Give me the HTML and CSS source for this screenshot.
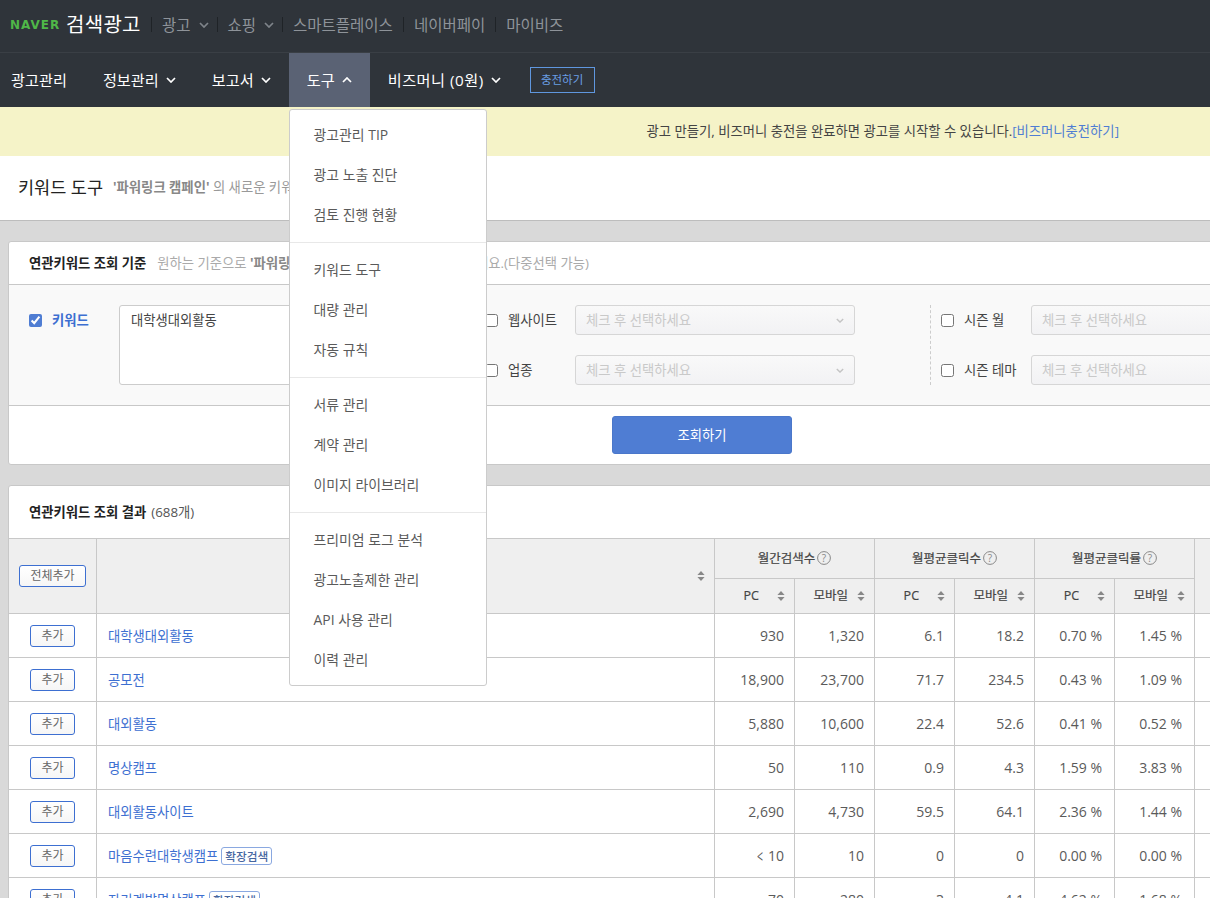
FILE: index.html
```html
<!DOCTYPE html>
<html lang="ko">
<head>
<meta charset="utf-8">
<title>키워드 도구</title>
<link rel="stylesheet" href="styles.css">
</head>
<body>
<svg class="sprite" aria-hidden="true">
  <symbol id="chev-d" viewBox="0 0 10 6"><path d="M1 1l4 4 4-4" fill="none" stroke="currentColor" stroke-width="1.7"/></symbol>
  <symbol id="chev-u" viewBox="0 0 10 6"><path d="M1 5l4-4 4 4" fill="none" stroke="currentColor" stroke-width="1.7"/></symbol>
  <symbol id="sort" viewBox="0 0 8 10"><path d="M4 0l3.6 4H.4zM4 10L.4 6h7.2z" fill="currentColor"/></symbol>
  <symbol id="help" viewBox="0 0 14 14"><circle cx="7" cy="7" r="6.4" fill="none" stroke="currentColor"/><text x="7" y="10.6" text-anchor="middle" font-size="10" fill="currentColor" font-family="Open Sans, sans-serif">?</text></symbol>
</svg>
<header class="top">
  <div class="brand"><span class="naver">NAVER</span><span class="brand-name">검색광고</span></div>
  <nav class="top-links">
    <a class="top-link top-link-arrow">광고<svg class="chev"><use href="#chev-d"/></svg></a>
    <a class="top-link top-link-arrow">쇼핑<svg class="chev"><use href="#chev-d"/></svg></a>
    <a class="top-link">스마트플레이스</a>
    <a class="top-link">네이버페이</a>
    <a class="top-link">마이비즈</a>
  </nav>
</header>
<nav class="main-nav">
  <a class="nav-item nav-first">광고관리</a>
  <a class="nav-item">정보관리<svg class="chev"><use href="#chev-d"/></svg></a>
  <a class="nav-item">보고서<svg class="chev"><use href="#chev-d"/></svg></a>
  <a class="nav-item nav-active">도구<svg class="chev"><use href="#chev-u"/></svg></a>
  <a class="nav-item nav-biz">비즈머니 (0원)<svg class="chev"><use href="#chev-d"/></svg></a>
  <a class="charge">충전하기</a>
</nav>
<ul class="menu">
  <li class="menu-group"><a>광고관리 TIP</a><a>광고 노출 진단</a><a>검토 진행 현황</a></li>
  <li class="menu-group"><a>키워드 도구</a><a>대량 관리</a><a>자동 규칙</a></li>
  <li class="menu-group"><a>서류 관리</a><a>계약 관리</a><a>이미지 라이브러리</a></li>
  <li class="menu-group"><a>프리미엄 로그 분석</a><a>광고노출제한 관리</a><a>API 사용 관리</a><a>이력 관리</a></li>
</ul>
<div class="notice">광고 만들기, 비즈머니 충전을 완료하면 광고를 시작할 수 있습니다.<a class="notice-link">[비즈머니충전하기]</a></div>
<div class="title-bar">
  <h1 class="title">키워드 도구</h1>
  <p class="subtitle"><b>'파워링크 캠페인'</b> 의 새로운 키워드를 찾아보세요</p>
</div>
<main class="content">
  <section class="card">
    <div class="card-head"><strong>연관키워드 조회 기준</strong><span class="hint">원하는 기준으로 <b>'파워링크 캠페인'</b>의 연관키워드를 조회하세요.(다중선택 가능)</span></div>
    <div class="form">
      <div class="group-keyword">
        <label class="check check-keyword"><input type="checkbox" checked>키워드</label>
        <div class="textarea">대학생대외활동</div>
      </div>
      <div class="group-mid">
        <label class="check"><input type="checkbox">웹사이트</label>
        <div class="select">체크 후 선택하세요<svg class="chev-s"><use href="#chev-d"/></svg></div>
        <label class="check"><input type="checkbox">업종</label>
        <div class="select">체크 후 선택하세요<svg class="chev-s"><use href="#chev-d"/></svg></div>
      </div>
      <div class="group-right">
        <label class="check"><input type="checkbox">시즌 월</label>
        <div class="select">체크 후 선택하세요<svg class="chev-s"><use href="#chev-d"/></svg></div>
        <label class="check"><input type="checkbox">시즌 테마</label>
        <div class="select">체크 후 선택하세요<svg class="chev-s"><use href="#chev-d"/></svg></div>
      </div>
    </div>
    <div class="form-foot"><button class="search-btn" type="button">조회하기</button></div>
  </section>
  <section class="card card-result">
    <div class="card-head card-head-result"><strong>연관키워드 조회 결과</strong><span class="count">(688개)</span></div>
    <table class="grid">
      <colgroup><col class="c-add"><col class="c-kw"><col class="c-n"><col class="c-n"><col class="c-n"><col class="c-n"><col class="c-n"><col class="c-n"><col class="c-rest"></colgroup>
      <thead>
        <tr class="h1">
          <th rowspan="2"><button class="add add-all" type="button">전체추가</button></th>
          <th rowspan="2" class="th-kw"><svg class="sort"><use href="#sort"/></svg></th>
          <th colspan="2">월간검색수<svg class="help"><use href="#help"/></svg></th>
          <th colspan="2">월평균클릭수<svg class="help"><use href="#help"/></svg></th>
          <th colspan="2">월평균클릭률<svg class="help"><use href="#help"/></svg></th>
          <th rowspan="2"></th>
        </tr>
        <tr class="h2">
          <th><span class="th-in"><span class="th-pc">PC</span><svg class="sort"><use href="#sort"/></svg></span></th>
          <th><span class="th-in">모바일<svg class="sort"><use href="#sort"/></svg></span></th>
          <th><span class="th-in"><span class="th-pc">PC</span><svg class="sort"><use href="#sort"/></svg></span></th>
          <th><span class="th-in">모바일<svg class="sort"><use href="#sort"/></svg></span></th>
          <th><span class="th-in"><span class="th-pc">PC</span><svg class="sort"><use href="#sort"/></svg></span></th>
          <th><span class="th-in">모바일<svg class="sort"><use href="#sort"/></svg></span></th>
        </tr>
      </thead>
      <tbody>
        <tr><td class="td-add"><button class="add" type="button">추가</button></td><td class="td-kw"><a>대학생대외활동</a></td><td>930</td><td>1,320</td><td>6.1</td><td>18.2</td><td class="pct">0.70 %</td><td class="pct">1.45 %</td><td></td></tr>
        <tr><td class="td-add"><button class="add" type="button">추가</button></td><td class="td-kw"><a>공모전</a></td><td>18,900</td><td>23,700</td><td>71.7</td><td>234.5</td><td class="pct">0.43 %</td><td class="pct">1.09 %</td><td></td></tr>
        <tr><td class="td-add"><button class="add" type="button">추가</button></td><td class="td-kw"><a>대외활동</a></td><td>5,880</td><td>10,600</td><td>22.4</td><td>52.6</td><td class="pct">0.41 %</td><td class="pct">0.52 %</td><td></td></tr>
        <tr><td class="td-add"><button class="add" type="button">추가</button></td><td class="td-kw"><a>명상캠프</a></td><td>50</td><td>110</td><td>0.9</td><td>4.3</td><td class="pct">1.59 %</td><td class="pct">3.83 %</td><td></td></tr>
        <tr><td class="td-add"><button class="add" type="button">추가</button></td><td class="td-kw"><a>대외활동사이트</a></td><td>2,690</td><td>4,730</td><td>59.5</td><td>64.1</td><td class="pct">2.36 %</td><td class="pct">1.44 %</td><td></td></tr>
        <tr><td class="td-add"><button class="add" type="button">추가</button></td><td class="td-kw"><a>마음수련대학생캠프</a><span class="tag">확장검색</span></td><td><span class="lt">&lt;</span> 10</td><td>10</td><td>0</td><td>0</td><td class="pct">0.00 %</td><td class="pct">0.00 %</td><td></td></tr>
        <tr><td class="td-add"><button class="add" type="button">추가</button></td><td class="td-kw"><a>자기계발명상캠프</a><span class="tag">확장검색</span></td><td>70</td><td>280</td><td>3</td><td>4.1</td><td class="pct">4.62 %</td><td class="pct">1.68 %</td><td></td></tr>
      </tbody>
    </table>
  </section>
</main>
</body>
</html>
```

FILE: styles.css
```css
* { box-sizing: border-box; }
html, body { margin: 0; height: 898px; overflow: hidden; }
body {
  position: relative;
  background: #d9d9d9;
  color: #333;
  font: 13.33px/18px "Open Sans", "Noto Sans CJK KR", sans-serif;
}
.sprite { position: absolute; width: 0; height: 0; }

.top {
  display: flex;
  align-items: center;
  height: 52px;
  background: #2f343a;
  padding: 0 0 3px 10px;
}
.brand { display: flex; align-items: center; width: 141px; }
.naver {
  font: 700 12px/16px "DejaVu Sans", sans-serif;
  color: #4fb848;
  letter-spacing: 1px;
  width: 56px;
  padding-top: 1px;
}
.brand-name { font-size: 20px; line-height: 26px; color: #fff; letter-spacing: .3px; white-space: nowrap; }
.top-links { display: flex; align-items: center; }
.top-link {
  display: flex;
  align-items: center;
  padding: 0 10px;
  height: 15px;
  font-size: 15.5px;
  color: #8e9399;
  border-left: 1px solid #1f2327;
  white-space: nowrap;
}
.top-link-arrow { padding-right: 8px; }
.top-link .chev { color: #7f848a; margin-left: 8px; }
.chev { width: 10px; height: 6px; margin-left: 7px; color: #fff; }

.main-nav {
  display: flex;
  align-items: center;
  height: 55px;
  background: #2f343a;
  border-top: 1px solid #3a3f45;
}
.nav-item {
  display: flex;
  align-items: center;
  height: 54px;
  padding: 0 18px;
  font-size: 15.2px;
  color: #fff;
  white-space: nowrap;
}
.nav-first { padding-left: 11px; }
.nav-active { background: #5a6274; }
.nav-biz { letter-spacing: .5px; }
.charge {
  margin-left: 11px;
  width: 65px;
  height: 26px;
  border: 1px solid #5f97df;
  color: #6a9fe4;
  font-size: 11.5px;
  line-height: 24px;
  text-align: center;
}

.menu {
  position: absolute;
  z-index: 5;
  left: 289px;
  top: 109px;
  width: 198px;
  margin: 0;
  padding: 0;
  list-style: none;
  background: #fff;
  border: 1px solid #ccc;
  border-radius: 3px;
}
.menu-group { padding: 5px 0 7px; border-bottom: 1px solid #e8e8e8; }
.menu-group + .menu-group { padding-top: 7px; }
.menu-group:last-child { border-bottom: 0; padding-bottom: 5px; }
.menu-group a {
  display: block;
  height: 40px;
  padding-left: 23.5px;
  font-size: 13.9px;
  line-height: 40px;
  color: #5a5a5a;
}

.notice {
  height: 49px;
  padding-right: 91px;
  background: #f5f3c8;
  line-height: 49px;
  text-align: right;
  color: #444;
}
.notice-link { color: #4f7dd3; }

.title-bar {
  display: flex;
  align-items: center;
  height: 65px;
  padding: 0 18px 2px;
  background: #fff;
  border-bottom: 1px solid #bdbdbd;
}
.title { margin: 0; font-size: 17.5px; font-weight: 400; color: #222; white-space: nowrap; }
.subtitle { margin: 0 0 0 10px; color: #999; white-space: nowrap; }
.subtitle b { color: #888; }

.content { padding: 20px 0 0 8px; width: 1340px; }
.card {
  background: #fff;
  border: 1px solid #c8c8c8;
  border-radius: 3px;
}
.card-result { margin-top: 20px; }
.card-head {
  display: flex;
  align-items: center;
  height: 42px;
  padding-left: 20px;
  color: #222;
  white-space: nowrap;
}
.card-head-result { height: 53px; border-bottom: 1px solid #c8c8c8; }
.hint { margin-left: 11px; color: #aaa; }
.hint b { color: #888; }
.count { margin-left: 5px; color: #555; }

.form {
  display: flex;
  height: 122px;
  padding: 20px 0 0 20px;
  background: #f9f9f9;
  border-top: 1px solid #c8c8c8;
  border-bottom: 1px solid #c8c8c8;
}
.group-keyword { display: flex; width: 456px; }
.check { display: flex; align-items: center; height: 30px; color: #444; white-space: nowrap; }
.check input {
  width: 13px;
  height: 13px;
  margin: 0 10px 0 0;
  accent-color: #4f7dd3;
}
.check-keyword { width: 90px; color: #3d6fd1; font-weight: 700; }
.textarea {
  width: 346px;
  height: 80px;
  padding: 5px 11px;
  background: #fff;
  border: 1px solid #ccc;
  border-radius: 3px;
  color: #444;
}
.group-mid, .group-right {
  display: grid;
  grid-template-columns: 90px 280px;
  grid-template-rows: 30px 30px;
  row-gap: 20px;
  height: 80px;
}
.group-mid { width: 445px; }
.group-right {
  padding-left: 10px;
  border-left: 1px dashed #ccc;
}
.select {
  display: flex;
  align-items: center;
  justify-content: space-between;
  padding: 0 10px;
  background: linear-gradient(#f9f9f9, #f2f2f4);
  border: 1px solid #d6d6d6;
  border-radius: 3px;
  color: #c9c9c9;
}
.chev-s { width: 8px; height: 5px; color: #c4c4c4; }
.form-foot { padding: 10px 0 0 603px; height: 58px; }
.search-btn {
  display: block;
  width: 180px;
  height: 38px;
  padding: 0;
  background: #4f7dd3;
  border: 1px solid #4a77ca;
  border-radius: 3px;
  color: #fff;
  font: inherit;
}

.grid { border-collapse: separate; border-spacing: 0; table-layout: fixed; width: 1286px; }
.c-add { width: 88px; }
.c-kw { width: 618px; }
.c-n { width: 80px; }
.c-rest { width: 100px; }
.grid th, .grid td { border-right: 1px solid #c8c8c8; border-bottom: 1px solid #c8c8c8; padding: 0; }
.grid th { background: #efefef; font-size: 12.5px; font-weight: 400; color: #444; text-align: center; -webkit-text-stroke: .2px #444; }
.h1 { height: 40px; }
.h2 { height: 35px; }
.grid tbody tr { height: 44px; }
.grid .th-kw { text-align: right; padding-right: 9px; }
.sort { width: 8px; height: 10px; color: #888; vertical-align: -1px; }
.th-in { display: flex; align-items: center; justify-content: flex-end; padding-right: 9px; gap: 9px; }
.th-pc { margin-right: 9px; }
.help { width: 14px; height: 14px; margin-left: 2px; color: #888; vertical-align: -2px; -webkit-text-stroke: 0; }
.grid td { font-size: 14px; color: #5a5a5a; text-align: right; padding-right: 10px; white-space: nowrap; }
.grid .pct { padding-right: 12px; }
.lt { display: inline-block; transform: scale(.75, 1.35); }
.grid .td-add { text-align: center; padding-right: 0; }
.grid .td-kw { text-align: left; padding: 0 0 0 11px; font-size: 13.33px; }
.td-kw a { color: #3d6fd1; }
.add {
  width: 45px;
  height: 22px;
  padding: 0;
  background: linear-gradient(#fff, #f6f6f6);
  border: 1px solid #3d6fd1;
  border-radius: 3px;
  color: #666;
  font: 12px/20px "Open Sans", "Noto Sans CJK KR", sans-serif;
  -webkit-text-stroke: 0;
}
.add-all { width: 67px; }
.tag {
  display: inline-block;
  margin-left: 3px;
  padding: 0 3px;
  height: 18px;
  border: 1px solid #8aa8e0;
  border-radius: 3px;
  font-size: 11.7px;
  font-weight: 500;
  line-height: 16px;
  color: #46669f;
}
```
